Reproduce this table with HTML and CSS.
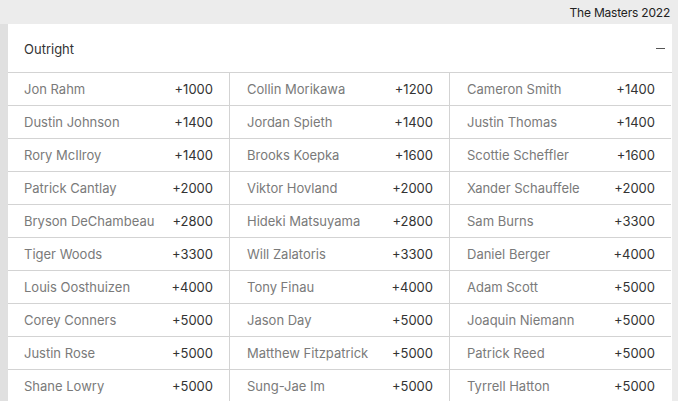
FILE: index.html
```html
<!DOCTYPE html>
<html>
<head>
<meta charset="utf-8">
<link rel="stylesheet" href="styles.css">
</head>
<body>
<div class="topbar"><span class="event">The Masters 2022</span></div>
<div class="main">
  <div class="panel">
    <div class="panel-head"><span class="title">Outright</span><span class="toggle"></span></div>
    <div class="grid">
      <div class="cell"><span class="name">Jon Rahm</span><span class="odds">+1000</span></div>
      <div class="cell"><span class="name">Collin Morikawa</span><span class="odds">+1200</span></div>
      <div class="cell"><span class="name">Cameron Smith</span><span class="odds">+1400</span></div>
      <div class="cell"><span class="name">Dustin Johnson</span><span class="odds">+1400</span></div>
      <div class="cell"><span class="name">Jordan Spieth</span><span class="odds">+1400</span></div>
      <div class="cell"><span class="name">Justin Thomas</span><span class="odds">+1400</span></div>
      <div class="cell"><span class="name">Rory McIlroy</span><span class="odds">+1400</span></div>
      <div class="cell"><span class="name">Brooks Koepka</span><span class="odds">+1600</span></div>
      <div class="cell"><span class="name">Scottie Scheffler</span><span class="odds">+1600</span></div>
      <div class="cell"><span class="name">Patrick Cantlay</span><span class="odds">+2000</span></div>
      <div class="cell"><span class="name">Viktor Hovland</span><span class="odds">+2000</span></div>
      <div class="cell"><span class="name">Xander Schauffele</span><span class="odds">+2000</span></div>
      <div class="cell"><span class="name">Bryson DeChambeau</span><span class="odds">+2800</span></div>
      <div class="cell"><span class="name">Hideki Matsuyama</span><span class="odds">+2800</span></div>
      <div class="cell"><span class="name">Sam Burns</span><span class="odds">+3300</span></div>
      <div class="cell"><span class="name">Tiger Woods</span><span class="odds">+3300</span></div>
      <div class="cell"><span class="name">Will Zalatoris</span><span class="odds">+3300</span></div>
      <div class="cell"><span class="name">Daniel Berger</span><span class="odds">+4000</span></div>
      <div class="cell"><span class="name">Louis Oosthuizen</span><span class="odds">+4000</span></div>
      <div class="cell"><span class="name">Tony Finau</span><span class="odds">+4000</span></div>
      <div class="cell"><span class="name">Adam Scott</span><span class="odds">+5000</span></div>
      <div class="cell"><span class="name">Corey Conners</span><span class="odds">+5000</span></div>
      <div class="cell"><span class="name">Jason Day</span><span class="odds">+5000</span></div>
      <div class="cell"><span class="name">Joaquin Niemann</span><span class="odds">+5000</span></div>
      <div class="cell"><span class="name">Justin Rose</span><span class="odds">+5000</span></div>
      <div class="cell"><span class="name">Matthew Fitzpatrick</span><span class="odds">+5000</span></div>
      <div class="cell"><span class="name">Patrick Reed</span><span class="odds">+5000</span></div>
      <div class="cell"><span class="name">Shane Lowry</span><span class="odds">+5000</span></div>
      <div class="cell"><span class="name">Sung-Jae Im</span><span class="odds">+5000</span></div>
      <div class="cell"><span class="name">Tyrrell Hatton</span><span class="odds">+5000</span></div>
    </div>
  </div>
</div>
</body>
</html>
```
FILE: styles.css
```css
html, body {
  margin: 0;
  padding: 0;
  background: #ececec;
  font-family: "Inter", "Liberation Sans", sans-serif;
  overflow: hidden;
}
.topbar {
  height: 24px;
  display: flex;
  justify-content: flex-end;
  align-items: center;
  padding-right: 8px;
  background: #ececec;
}
.event {
  font-size: 12px;
  letter-spacing: -0.2px;
  color: #222;
}
.main {
  display: flex;
  background: #ececec;
  border-left: 8px solid #e0e0e0;
  padding-right: 6px;
}
.panel {
  flex: 1;
  background: #fff;
}
.panel-head {
  height: 47px;
  border-bottom: 1px solid #d3d3d3;
  display: flex;
  align-items: center;
  justify-content: space-between;
  padding: 1px 7px 0 16px;
}
.title {
  font-size: 13px;
  color: #333;
}
.toggle {
  width: 9px;
  height: 1px;
  background: #555;
}
.grid {
  display: grid;
  grid-template-columns: 221px 220px 222px;
}
.cell {
  height: 32px;
  border-bottom: 1px solid #d3d3d3;
  display: flex;
  align-items: center;
  justify-content: space-between;
  padding: 0 16px;
  font-size: 13px;
}
.cell:nth-child(3n+2), .cell:nth-child(3n) {
  border-left: 1px solid #d3d3d3;
  padding-left: 17px;
}
.name { color: #7a7a7a; }
.odds { color: #333; }
```
